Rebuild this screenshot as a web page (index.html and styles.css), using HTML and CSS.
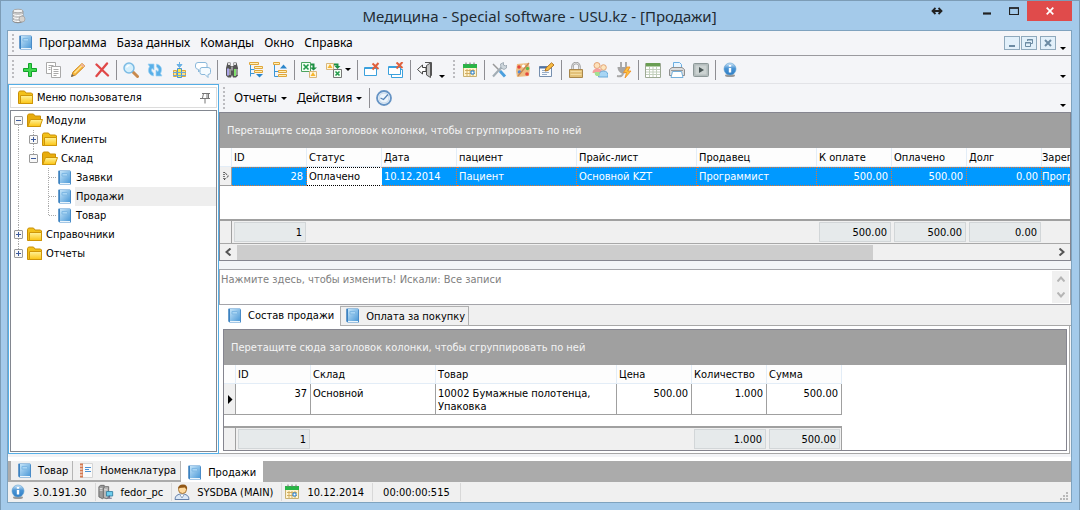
FILE: index.html
```html
<!DOCTYPE html>
<html lang="ru">
<head>
<meta charset="utf-8">
<title>Медицина - Special software - USU.kz - [Продажи]</title>
<link rel="stylesheet" href="styles.css">
</head>
<body>
<svg class="sprite" aria-hidden="true">
  <defs>
    <linearGradient id="g-book" x1="0" y1="0" x2="1" y2="1"><stop offset="0" stop-color="#c4e4f9"/><stop offset="1" stop-color="#4f9bd8"/></linearGradient>
    <linearGradient id="g-fold" x1="0" y1="0" x2="0" y2="1"><stop offset="0" stop-color="#fff39a"/><stop offset="1" stop-color="#fbc413"/></linearGradient>
    <linearGradient id="g-info" x1="0" y1="0" x2="0" y2="1"><stop offset="0" stop-color="#d5eafa"/><stop offset=".45" stop-color="#4a94d4"/><stop offset="1" stop-color="#2f7ec6"/></linearGradient>
  </defs>
  <symbol id="book" viewBox="0 0 16 16"><path d="M1.500.5h11.500l1 1v13H2.500l-1-1z" fill="#4a90cd"/><path d="M3 1h10v12H3z" fill="url(#g-book)"/><path d="M2 1v12.500" stroke="#2f74b5"/><path d="M5 3.500h5.500v2.500H5z" fill="#a9d5f4" stroke="#7fb8e4"/><path d="M3 13.500h10" stroke="#eaf5fc"/><path d="M13.500 2v12" stroke="#4a8cc8"/></symbol>
  <symbol id="folder" viewBox="0 0 16 16"><path d="M.5 13.500v-11l1-1.500h5l1.500 2h5.500l1 1v9.500z" fill="#f2c11a" stroke="#c98f06"/><path d="M2.500 13.500v-8h12v8z" fill="url(#g-fold)" stroke="#cf9608"/></symbol>
  <symbol id="folder-open" viewBox="0 0 16 16"><path d="M.5 13.500v-11l1-1.500h5l1.500 2h5.500v10.500z" fill="#e8ac0c" stroke="#c98f06"/><path d="M.8 13.500 3.500 6.500h12l-2.500 7z" fill="url(#g-fold)" stroke="#cf9608"/></symbol>
  <symbol id="db" viewBox="0 0 16 16"><ellipse cx="7" cy="13" rx="5.500" ry="2.200" fill="#8a8a8a"/><path d="M2 3v9.500c0 2 10 2 10 0V3z" fill="#c9c9c9" stroke="#999"/><path d="M2 6c1 2 9 2 10 0M2 9c1 2 9 2 10 0M2 12c1 2 9 2 10 0" fill="none" stroke="#fff"/><ellipse cx="7" cy="3" rx="5" ry="1.800" fill="#f4f4f4" stroke="#aaa"/><circle cx="11" cy="11" r="3" fill="#d6d3cf" stroke="#aaa"/></symbol>
  <symbol id="plus" viewBox="0 0 16 16"><path d="M6.500 1.500h3v5h5v3h-5v5h-3v-5h-5v-3h5z" fill="#3fd64f" stroke="#12a32a"/></symbol>
  <symbol id="copy" viewBox="0 0 16 16"><g fill="#fff" stroke="#a9a9a9"><path d="M.5.5h9v11h-9z"/><path d="M5.500 4.500h9v11h-9z"/><path d="M2.500 3.500h5M2.500 5.500h2M2.500 7.500h2M7.500 7.500h5M7.500 9.500h5M7.500 11.500h5M7.500 13.500h3"/></g></symbol>
  <symbol id="pencil" viewBox="0 0 16 16"><path d="M1.500 14.500 3 10 12 1.500l2.800 2.500-9.300 9z" fill="#f7b73b" stroke="#d18a20"/><path d="m4.500 11 8-8" stroke="#ffe39a" stroke-width="1.500"/><path d="m12 1.500 2.800 2.500-1.500 1.400L10.500 3z" fill="#efb39b"/><path d="m1 15 1-3 2 1.800z" fill="#666"/></symbol>
  <symbol id="cross" viewBox="0 0 16 16"><path d="m2.500 2.500 11.500 11M13 1.500 2.500 14" stroke="#e04848" stroke-width="2.300" stroke-linecap="round"/></symbol>
  <symbol id="find" viewBox="0 0 16 16"><path d="m10 10 4.500 4.500" stroke="#c98a4d" stroke-width="3" stroke-linecap="round"/><circle cx="6" cy="6" r="5" fill="#d4effc" stroke="#7bbbe4" stroke-width="1.500"/><path d="M3.500 5.500c.5-1.500 1.500-2 3-2" fill="none" stroke="#fff" stroke-width="1.500"/></symbol>
  <symbol id="refresh" viewBox="0 0 16 16"><path d="M1 2h6v6L5 6.500C4 8 4.500 10 6.500 11v3C2 13 0 9 2.500 4.500zM15 14H9V8l2 1.500C12 8 11.500 6 9.500 5V2C14 3 16 7 13.500 11.500z" fill="#5ab0e8" stroke="#9dd2f4" stroke-width=".7"/></symbol>
  <symbol id="sum" viewBox="0 0 16 16"><path d="M2.500 8.500h3v6h-3zM10.500 8.500h4v6h-4z" fill="#fbe08d" stroke="#dca83a"/><path d="M6.500 6.500h4v9h-4z" fill="#ffe84a" stroke="#4a95d4"/><path d="M2 10.500h13M2 13.500h13" stroke="#6aa9da"/><path d="M8.500 0v4M6 2.500h5L8.500 5.500z" stroke="#69b1e5" fill="#69b1e5"/></symbol>
  <symbol id="chat" viewBox="0 0 16 16"><path d="M.5 3q0-2.500 2.500-2.500h7q2 0 2 2v3q0 2-2 2H6L3.500 10V7.500Q.5 7 .5 5z" fill="#fff" stroke="#8ab8da"/><path d="M5 7.500q0-2 2-2h6q2.500 0 2.500 2v3q0 2-2.500 2v3l-3-3H7q-2 0-2-2z" fill="#f5fbff" stroke="#8ab8da"/></symbol>
  <symbol id="binoculars" viewBox="0 0 16 16"><path d="M3.500.5h3V4h3V.5h3L14 6v7.500L12 15.500H9L8 13l-1 2.500H4l-2-2V6z" fill="#555"/><path d="M4 6.500v7" stroke="#a9a3e8" stroke-width="2"/><path d="M11 7v7" stroke="#7fe06b" stroke-width="2"/><path d="M6 7v6M13 7v6" stroke="#ddd"/><path d="M4 1h2v2H4zM10 1h2v2h-2z" fill="#ddd"/><path d="M7.500 4.500h1v4h-1z" fill="#ddd"/></symbol>
  <symbol id="tree-down" viewBox="0 0 16 16"><path d="M2.500 3v11.500M2.500 7.500h4M2.500 11.500h4" stroke="#3b96d6" fill="none"/><path d="M1.500.5h9v2h-9zM6.500 4.500h8v2h-8zM6.500 8.500h8v2h-8z" fill="#fff0b5" stroke="#dfa63c"/><path d="M8 12h7l-3.500 3.500z" fill="#2b86cc"/></symbol>
  <symbol id="tree-up" viewBox="0 0 16 16"><path d="M2.500 3v11.500h4M2.500 9.500h4" stroke="#3b96d6" fill="none"/><path d="M1.500.5h6v2h-6zM6.500 8.500h8v2h-8zM6.500 12.500h8v2h-8z" fill="#fff0b5" stroke="#dfa63c"/><path d="M8 6.500h7L11.500 2.500z" fill="#2b86cc"/></symbol>
  <symbol id="excel-out" viewBox="0 0 16 16"><path d="M.5.500h9v9h-9z" fill="#f3fff3" stroke="#4ca461"/><path d="m2.500 2.500 5 5m0-5-5 5" stroke="#249b4c" stroke-width="1.700"/><path d="M10 2.500h2.500v4" fill="none" stroke="#1c8f42" stroke-width="2"/><path d="M9 5.500h7l-3.500 3z" fill="#1c8f42"/><path d="M8.500 9.500h7v6h-7z" fill="#fff6df" stroke="#d9b77a"/><path d="m12 10 2.500 4h-5z" fill="#f6b52d"/></symbol>
  <symbol id="excel-in" viewBox="0 0 16 16"><path d="M.5 1.500h7v6h-7z" fill="#fff6df" stroke="#d9b77a"/><path d="M4 2 6.500 6h-5z" fill="#f6b52d"/><path d="M8 2.500h3.500v2" fill="none" stroke="#1c8f42" stroke-width="2"/><path d="M8.500 4h6l-3 3z" fill="#1c8f42"/><path d="M7.500 7.500h8v8h-8z" fill="#f3fff3" stroke="#777"/><path d="m9.500 9.500 4 4m0-4-4 4" stroke="#249b4c" stroke-width="1.600"/></symbol>
  <symbol id="win-close" viewBox="0 0 16 16"><path d="M.5 5.500h12v8H.5z" fill="#fff" stroke="#3ba1dd"/><path d="M.5 6.500h12" stroke="#3ba1dd"/><path d="m8.500 1.500 6 5.500m0-6-6 6.500" stroke="#e0603c" stroke-width="2"/></symbol>
  <symbol id="win-close-all" viewBox="0 0 16 16"><path d="M3.500 7.500h11v8h-11z" fill="#fff" stroke="#3ba1dd"/><path d="M.5 4.500h12v8H.5z" fill="#fff" stroke="#3ba1dd"/><path d="M.5 5.500h12" stroke="#3ba1dd"/><path d="m8.500.5 6 5.500m0-6-6 6.500" stroke="#e0603c" stroke-width="2"/></symbol>
  <symbol id="exit" viewBox="0 0 16 16"><path d="M8 .5h6.500v13H13" fill="none" stroke="#555"/><path d="M9.500 3.500 13.500 1v14.500l-4-2.500z" fill="#c4c4c4" stroke="#555"/><path d="M.5 7.500 5.500 3v2.500h3.500v4H5.500V12z" fill="#fff" stroke="#444"/></symbol>
  <symbol id="calendar" viewBox="0 0 16 16"><path d="M1.500 2.500h13v12h-13z" fill="#fff4cf" stroke="#c8b071"/><path d="M1 2h14v4H1z" fill="#28b545"/><path d="M4 .5v2.500M8 .5v2.500M12 .5v2.500" stroke="#777"/><path d="M3 8.500h10M3 11.500h10M5 7v7M8 7v7M11 7v7" stroke="#d3ae62"/><path d="M9 9h3v3H9z" fill="#fff" stroke="#1c7bd0"/></symbol>
  <symbol id="tools" viewBox="0 0 16 16"><path d="m2 2 9 9" stroke="#999" stroke-width="1.500"/><path d="m9 9 5 5.500" stroke="#4b9fde" stroke-width="3"/><path d="m13 3-3 3-2.500 2.500L2 14.500" stroke="#a3aeb6" stroke-width="2.200"/><path d="m9.500 2 3-1.500v2.500l2 1 1-1v3l-2.500 1.500L10 6z" fill="#cdd6dc" stroke="#8e9ba5" stroke-width=".7"/></symbol>
  <symbol id="palette" viewBox="0 0 16 16"><path d="M2 2 13 1l2 5-1 8-12 1L1 9z" fill="#edbd82"/><circle cx="4" cy="5" r="1.800" fill="#e6473c"/><circle cx="8.500" cy="4" r="1.600" fill="#fff"/><circle cx="12.500" cy="6.500" r="1.700" fill="#5cbb4c"/><circle cx="4.500" cy="10" r="1.800" fill="#508ada"/><circle cx="12" cy="12" r="1.800" fill="#e6473c"/><path d="m14 1-6 7-5 6" stroke="#c98752" stroke-width="1.300"/></symbol>
  <symbol id="note" viewBox="0 0 16 16"><path d="M.5 4.500h12v10H.5z" fill="#f8fbff" stroke="#768fae"/><path d="M.5 5.500h12" stroke="#4f72a5" stroke-width="2"/><path d="M3 8.500h5M3 10.500h7M3 12.500h5" stroke="#97adc8"/><path d="m6 9 1-3L12.500.8 15 3 9 8.500z" fill="#f9bd43" stroke="#b07528"/></symbol>
  <symbol id="lock" viewBox="0 0 16 16"><path d="M4.500 8V4.500a3.500 3.500 0 0 1 7 0V8" fill="none" stroke="#999" stroke-width="2.400"/><path d="M4.500 8V4.500a3.500 3.500 0 0 1 7 0V8" fill="none" stroke="#ddd"/><path d="M1.500 7.500h13v8h-13z" fill="#e3c178" stroke="#a9874b"/><path d="M2.500 9.500h11M2.500 12.500h11" stroke="#f3dca2"/></symbol>
  <symbol id="users" viewBox="0 0 16 16"><circle cx="5" cy="3.500" r="3" fill="#fde1bb" stroke="#e3a476"/><path d="M.5 11q0-4.500 5-4.500T10 11z" fill="#f6a09c"/><circle cx="11.500" cy="5.500" r="2.800" fill="#fde5bd" stroke="#e3a476"/><path d="M6.500 15q0-6 5-6t4.500 6z" fill="#a8d5f4" stroke="#69a9d8"/><path d="M2.500 10h5v4h-3q-2-1-2-4z" fill="#a4e091"/></symbol>
  <symbol id="plug" viewBox="0 0 16 16"><path d="M5 0v5M10 0v5" stroke="#aaa" stroke-width="2"/><path d="M1.500 5h12v2q-2 4-5 4.500h-3Q1.500 9 1.500 5z" fill="#a5a5a5"/><path d="M7 11q0 4-6 3" fill="none" stroke="#aaa" stroke-width="2"/><path d="m11 5-3.500 5.500h3L9 16l6-7h-3.500L14 5z" fill="#ffc33f" stroke="#ed8d22" stroke-width=".8"/></symbol>
  <symbol id="sheet" viewBox="0 0 16 16"><path d="M.5 1.500h15v14H.5z" fill="#fff" stroke="#9da994"/><path d="M1 1h14v3.500H1z" fill="#6a9e53"/><path d="M4.500 5v10M8 5v10M11.500 5v10M1 7.500h14M1 10h14M1 12.500h14" stroke="#c2cfbc"/></symbol>
  <symbol id="printer" viewBox="0 0 16 16"><path d="M4.500 7V.5h6l2 2V8" fill="#e8f5ff" stroke="#6aaee2"/><path d="M.5 7.500 3 5.500h10l2.500 2v6H.5z" fill="#dcdcdc" stroke="#8f8f8f"/><path d="M3.500 9.500h9l1.500 6H2z" fill="#fff" stroke="#74afda"/><path d="M2 8.500h12" stroke="#999"/></symbol>
  <symbol id="play" viewBox="0 0 16 16"><rect x=".5" y="1.500" width="15" height="13" rx="1" fill="#b4bdbd" stroke="#8d9898"/><path d="M2.500 3.500h11v9h-11z" fill="#ccd3d2"/><path d="M6 5v6l5-3z" fill="#4b5757"/></symbol>
  <symbol id="info" viewBox="0 0 16 16"><ellipse cx="8" cy="13.500" rx="5" ry="1.500" fill="#999"/><circle cx="8" cy="7" r="6" fill="url(#g-info)" stroke="#5c9dcf" stroke-width=".6"/><path d="M8 3v1.700M8 6v4.500" stroke="#fff" stroke-width="2.400"/></symbol>
  <symbol id="clock" viewBox="0 0 16 16"><circle cx="8" cy="8" r="7" fill="#edf5fc" stroke="#6593c4" stroke-width="1.800"/><circle cx="8" cy="8" r="5" fill="none" stroke="#c5d7ea"/><path d="M4.500 8 7.500 9.500 12 4.500" fill="none" stroke="#5382b6" stroke-width="1.200"/></symbol>
  <symbol id="pin" viewBox="0 0 12 12"><path d="M3 1.500h8M4.500 1.500 3.500 6M9.500 1.500v4.500M8 2v4M1 6.500h10M6 7v4.500" stroke="#777" fill="none"/></symbol>
  <symbol id="notebook" viewBox="0 0 16 16"><path d="M1.500.5h12v14h-12z" fill="#fafafa" stroke="#d5d5d5"/><path d="M1 .5h3v14H1z" fill="#d37950"/><path d="M.5 3h3M.5 6h3M.5 9h3M.5 12h3" stroke="#fff"/><path d="M6 4.500h6M6 8.500h6M6 6.500h4" stroke="#4a92d5"/></symbol>
  <symbol id="server" viewBox="0 0 18 16"><path d="M1 2 3 .5h4V14l-2 1.500-4-2z" fill="#9b9b9b" stroke="#666"/><path d="M6 3.500 8 2h4v12l-2 1.500-4-1z" fill="#b9b9b9" stroke="#666"/><path d="M2 4h3M2 6h3M7 5.500h3" stroke="#e5e5e5"/><path d="M9.500 7.500h7v5h-7z" fill="#71cfee" stroke="#337fa3"/><path d="M13 12v2.500M10.500 15h5" stroke="#557"/></symbol>
  <symbol id="user" viewBox="0 0 16 16"><path d="M1 15.500q0-5.500 7-5.500t7 5.500z" fill="#dbe8f7" stroke="#6681a9"/><path d="m5.500 10 2.500 4 2.500-4z" fill="#fff" stroke="#8ea2bc"/><circle cx="8.500" cy="5.500" r="4" fill="#ffd99c" stroke="#a87637"/><path d="M4 5Q4 .5 9 .5T13 6L11 3.500 5 4z" fill="#915817"/></symbol>
</svg>

<div class="window">
  <header class="titlebar">
    <svg class="icon app-icon"><use href="#db"/></svg>
    <h1 class="title">Медицина - Special software - USU.kz - [Продажи]</h1>
    <div class="window-controls">
      <button class="win-btn wide" aria-label="Растянуть"><svg width="12" height="8" viewBox="0 0 12 8"><path d="M2 4h8M4.500 1 1.500 4l3 3M7.500 1l3 3-3 3" fill="none" stroke="#222" stroke-width="1.800"/></svg></button>
      <button class="win-btn" aria-label="Свернуть"><svg width="10" height="8" viewBox="0 0 10 8"><path d="M1 6.500h8" stroke="#222" stroke-width="2.200"/></svg></button>
      <button class="win-btn" aria-label="Развернуть"><svg width="10" height="8" viewBox="0 0 10 8"><path d="M.5 1h9v6.500h-9z" fill="none" stroke="#222" stroke-width="1.200"/><path d="M0 1h10" stroke="#222" stroke-width="1.500"/></svg></button>
      <button class="win-btn close" aria-label="Закрыть"><svg width="8" height="8" viewBox="0 0 8 8"><path d="m.7.7 6.600 6.600m0-6.600L.7 7.300" stroke="#fff" stroke-width="1.700"/></svg></button>
    </div>
  </header>

  <div class="client">
    <nav class="menubar">
      <span class="grip"></span>
      <svg class="icon"><use href="#book"/></svg>
      <button class="menu-item">Программа</button>
      <button class="menu-item">База данных</button>
      <button class="menu-item">Команды</button>
      <button class="menu-item">Окно</button>
      <button class="menu-item">Справка</button>
      <div class="mdi-controls">
        <button class="mdi-btn" aria-label="Свернуть окно"><svg width="10" height="10" viewBox="0 0 10 10"><path d="M2 8h6" stroke="#6c8ba3" stroke-width="2"/></svg></button>
        <button class="mdi-btn" aria-label="Восстановить окно"><svg width="10" height="10" viewBox="0 0 10 10"><path d="M3.500 3V1.500h5v4H7M3 2h6M1.500 4.500h5v4h-5zM1 5h6" fill="none" stroke="#6c8ba3"/></svg></button>
        <button class="mdi-btn last" aria-label="Закрыть окно"><svg width="10" height="10" viewBox="0 0 10 10"><path d="m2 2 6 6m0-6L2 8" stroke="#6c8ba3" stroke-width="2"/></svg></button>
      </div>
      <span class="more"></span>
    </nav>

    <div class="toolbar main-toolbar">
      <span class="grip"></span>
      <button class="tool" aria-label="Добавить"><svg class="icon"><use href="#plus"/></svg></button>
      <button class="tool" aria-label="Копировать"><svg class="icon"><use href="#copy"/></svg></button>
      <button class="tool" aria-label="Изменить"><svg class="icon"><use href="#pencil"/></svg></button>
      <button class="tool" aria-label="Удалить"><svg class="icon"><use href="#cross"/></svg></button>
      <span class="sep"></span>
      <button class="tool" aria-label="Поиск"><svg class="icon"><use href="#find"/></svg></button>
      <button class="tool" aria-label="Обновить"><svg class="icon"><use href="#refresh"/></svg></button>
      <button class="tool" aria-label="Итоги"><svg class="icon"><use href="#sum"/></svg></button>
      <button class="tool" aria-label="Сообщения"><svg class="icon"><use href="#chat"/></svg></button>
      <span class="sep"></span>
      <button class="tool" aria-label="Найти"><svg class="icon"><use href="#binoculars"/></svg></button>
      <button class="tool" aria-label="Развернуть группы"><svg class="icon"><use href="#tree-down"/></svg></button>
      <button class="tool" aria-label="Свернуть группы"><svg class="icon"><use href="#tree-up"/></svg></button>
      <span class="sep"></span>
      <button class="tool" aria-label="Экспорт"><svg class="icon"><use href="#excel-out"/></svg></button>
      <button class="tool drop" aria-label="Импорт"><svg class="icon"><use href="#excel-in"/></svg><span class="caret"></span></button>
      <span class="sep"></span>
      <button class="tool" aria-label="Закрыть вкладку"><svg class="icon"><use href="#win-close"/></svg></button>
      <button class="tool" aria-label="Закрыть все"><svg class="icon"><use href="#win-close-all"/></svg></button>
      <span class="sep"></span>
      <button class="tool" aria-label="Выход"><svg class="icon"><use href="#exit"/></svg></button>
      <span class="more inner"></span>
      <span class="grip second"></span>
      <button class="tool" aria-label="Календарь"><svg class="icon"><use href="#calendar"/></svg></button>
      <span class="sep"></span>
      <button class="tool" aria-label="Настройки"><svg class="icon"><use href="#tools"/></svg></button>
      <button class="tool" aria-label="Оформление"><svg class="icon"><use href="#palette"/></svg></button>
      <button class="tool" aria-label="Заметка"><svg class="icon"><use href="#note"/></svg></button>
      <span class="sep"></span>
      <button class="tool" aria-label="Блокировка"><svg class="icon"><use href="#lock"/></svg></button>
      <button class="tool" aria-label="Пользователи"><svg class="icon"><use href="#users"/></svg></button>
      <button class="tool" aria-label="Подключение"><svg class="icon"><use href="#plug"/></svg></button>
      <span class="sep"></span>
      <button class="tool" aria-label="Таблица"><svg class="icon"><use href="#sheet"/></svg></button>
      <button class="tool" aria-label="Печать"><svg class="icon"><use href="#printer"/></svg></button>
      <button class="tool" aria-label="Запуск"><svg class="icon"><use href="#play"/></svg></button>
      <span class="sep"></span>
      <button class="tool" aria-label="Справка"><svg class="icon"><use href="#info"/></svg></button>
      <span class="more"></span>
    </div>

    <div class="workspace">
      <aside class="sidebar">
        <div class="side-head">
          <svg class="icon"><use href="#folder"/></svg>
          <span class="side-title">Меню пользователя</span>
          <button class="pin" aria-label="Закрепить"><svg width="12" height="12"><use href="#pin"/></svg></button>
        </div>
        <div class="tree">
          <div class="node"><span class="cell down"><button class="toggle" aria-label="Свернуть"></button></span><svg class="icon"><use href="#folder-open"/></svg><span class="label">Модули</span></div>
          <div class="node"><span class="cell full"></span><span class="cell full"><button class="toggle plus" aria-label="Развернуть"></button></span><svg class="icon"><use href="#folder"/></svg><span class="label">Клиенты</span></div>
          <div class="node"><span class="cell full"></span><span class="cell up"><button class="toggle" aria-label="Свернуть"></button></span><svg class="icon"><use href="#folder-open"/></svg><span class="label">Склад</span></div>
          <div class="node"><span class="cell full"></span><span class="cell"></span><span class="cell full branch"></span><svg class="icon"><use href="#book"/></svg><span class="label">Заявки</span></div>
          <div class="node"><span class="cell full"></span><span class="cell"></span><span class="cell full branch"></span><svg class="icon"><use href="#book"/></svg><span class="label current">Продажи</span></div>
          <div class="node"><span class="cell full"></span><span class="cell"></span><span class="cell up branch"></span><svg class="icon"><use href="#book"/></svg><span class="label">Товар</span></div>
          <div class="node"><span class="cell full"><button class="toggle plus" aria-label="Развернуть"></button></span><svg class="icon"><use href="#folder"/></svg><span class="label">Справочники</span></div>
          <div class="node"><span class="cell up"><button class="toggle plus" aria-label="Развернуть"></button></span><svg class="icon"><use href="#folder"/></svg><span class="label">Отчеты</span></div>
        </div>
      </aside>

      <main class="content">
        <div class="toolbar sub-toolbar">
          <span class="grip"></span>
          <button class="text-tool">Отчеты<span class="caret"></span></button>
          <button class="text-tool">Действия<span class="caret"></span></button>
          <span class="sep"></span>
          <button class="tool" aria-label="Таймер"><svg class="icon"><use href="#clock"/></svg></button>
          <span class="more"></span>
        </div>

        <section class="grid-box">
          <div class="group-panel">Перетащите сюда заголовок колонки, чтобы сгруппировать по ней</div>
          <table class="grid sales">
            <colgroup><col class="w-mark"><col class="w-s"><col class="w-s"><col class="w-s"><col class="w-l"><col class="w-l"><col class="w-l"><col class="w-s"><col class="w-s"><col class="w-s"><col></colgroup>
            <thead><tr><th></th><th>ID</th><th>Статус</th><th>Дата</th><th>пациент</th><th>Прайс-лист</th><th>Продавец</th><th>К оплате</th><th>Оплачено</th><th>Долг</th><th>Зарег</th></tr></thead>
            <tbody>
              <tr class="selected"><td class="mark"><svg width="6" height="8" viewBox="0 0 6 8"><path d="M1 0v8l4.500-4z" fill="none" stroke="#000" stroke-dasharray="1 1"/></svg></td><td class="num">28</td><td class="focused">Оплачено</td><td>10.12.2014</td><td>Пациент</td><td>Основной KZT</td><td>Программист</td><td class="num">500.00</td><td class="num">500.00</td><td class="num">0.00</td><td>Прогр</td></tr>
              <tr class="blank"><td colspan="11"></td></tr>
            </tbody>
            <tfoot><tr><td class="mark"></td><td><span class="total">1</span></td><td></td><td></td><td></td><td></td><td></td><td><span class="total">500.00</span></td><td><span class="total">500.00</span></td><td><span class="total">0.00</span></td><td></td></tr></tfoot>
          </table>
          <div class="scroll-x">
            <button class="arrow" aria-label="Влево"><svg width="7" height="8" viewBox="0 0 7 8"><path d="M5.500.5 1.500 4l4 3.500" fill="none" stroke="#555" stroke-width="2"/></svg></button>
            <div class="track"><div class="thumb"></div></div>
            <button class="arrow" aria-label="Вправо"><svg width="7" height="8" viewBox="0 0 7 8"><path d="M1.500.5 5.500 4l-4 3.500" fill="none" stroke="#555" stroke-width="2"/></svg></button>
          </div>
        </section>

        <div class="filter">
          <textarea class="filter-text" aria-label="Фильтр" readonly>Нажмите здесь, чтобы изменить! Искали: Все записи</textarea>
          <div class="scroll-y">
            <button class="arrow" aria-label="Вверх"><svg width="8" height="6" viewBox="0 0 8 6"><path d="m.5 5.500 3.500-4 3.500 4" fill="none" stroke="#b5b5b5" stroke-width="2"/></svg></button>
            <button class="arrow" aria-label="Вниз"><svg width="8" height="6" viewBox="0 0 8 6"><path d="m.5.5 3.500 4 3.500-4" fill="none" stroke="#b5b5b5" stroke-width="2"/></svg></button>
          </div>
        </div>

        <div class="detail-tabs">
          <button class="detail-tab active"><svg class="icon"><use href="#book"/></svg>Состав продажи</button>
          <button class="detail-tab"><svg class="icon"><use href="#book"/></svg>Оплата за покупку</button>
        </div>
        <div class="detail-pane">
          <section class="grid-box">
            <div class="group-panel">Перетащите сюда заголовок колонки, чтобы сгруппировать по ней</div>
            <table class="grid items">
              <colgroup><col class="w-mark"><col class="w-s"><col class="w-xl"><col class="w-xxl"><col class="w-s"><col class="w-s"><col class="w-s"></colgroup>
              <thead><tr><th></th><th>ID</th><th>Склад</th><th>Товар</th><th>Цена</th><th>Количество</th><th>Сумма</th></tr></thead>
              <tbody>
                <tr class="item"><td class="mark"><svg width="6" height="9" viewBox="0 0 6 9"><path d="M1 0v9l4.500-4.500z"/></svg></td><td class="num">37</td><td>Основной</td><td>10002 Бумажные полотенца, Упаковка</td><td class="num">500.00</td><td class="num">1.000</td><td class="num">500.00</td></tr>
                <tr class="blank"><td colspan="7"></td></tr>
              </tbody>
              <tfoot><tr><td class="mark"></td><td><span class="total">1</span></td><td></td><td></td><td></td><td><span class="total">1.000</span></td><td><span class="total">500.00</span></td></tr></tfoot>
            </table>
          </section>
        </div>
      </main>
    </div>

    <div class="mdi-tabs">
      <button class="mdi-tab"><svg class="icon"><use href="#book"/></svg>Товар</button>
      <button class="mdi-tab"><svg class="icon"><use href="#notebook"/></svg>Номенклатура</button>
      <button class="mdi-tab active"><svg class="icon"><use href="#book"/></svg>Продажи</button>
    </div>

    <footer class="status">
      <span class="status-item"><svg class="icon"><use href="#info"/></svg>3.0.191.30</span>
      <span class="status-item"><svg class="icon"><use href="#server"/></svg>fedor_pc</span>
      <span class="status-item"><svg class="icon"><use href="#user"/></svg>SYSDBA (MAIN)</span>
      <span class="status-item"><svg class="icon"><use href="#calendar"/></svg>10.12.2014</span>
      <span class="status-item timer">00:00:00:515</span>
      <svg class="size-grip" width="8" height="8" viewBox="0 0 8 8"><path d="M6 0h2v2H6zM3 3h2v2H3zM6 3h2v2H6zM0 6h2v2H0zM3 6h2v2H3zM6 6h2v2H6z" fill="#b8b8b8"/></svg>
    </footer>
  </div>
</div>
</body>
</html>
```
FILE: styles.css
```css
* {
  box-sizing: border-box;
}

body {
  margin: 0;
  font-family: "DejaVu Sans Condensed", "DejaVu Sans", sans-serif;
  font-size: 11px;
  line-height: 13px;
  color: #000;
}

button {
  margin: 0;
  padding: 0;
  border: 0;
  background: none;
  font: inherit;
  color: inherit;
}

.sprite {
  position: absolute;
  width: 0;
  height: 0;
}

.icon {
  width: 16px;
  height: 16px;
  flex: none;
}

.window {
  min-height: 100vh;
  display: flex;
  flex-direction: column;
  padding: 0 7px 7px 6px;
  background: #a4caea;
  border: 1px solid #7c9cb6;
}

/* Title bar */
.titlebar {
  position: relative;
  display: flex;
  align-items: center;
  height: 29px;
}

.app-icon {
  margin-left: 4px;
}

.title {
  flex: 1;
  margin: 0;
  padding-right: 20px;
  text-align: center;
  font: 400 15px/22px "Noto Sans", sans-serif;
  color: #1f2a33;
}

.window-controls {
  position: absolute;
  top: 0;
  right: 0;
  display: flex;
}

.win-btn {
  display: flex;
  align-items: center;
  justify-content: center;
  width: 27px;
  height: 20px;
}

.win-btn.wide {
  margin-right: 23px;
}

.win-btn.close {
  width: 45px;
  background: #e04b4b;
}

/* Client area */
.client {
  flex: 1;
  display: flex;
  flex-direction: column;
  border: 1px solid #7fa3bf;
  background: #f3f4f7;
}

.menubar,
.toolbar {
  display: flex;
  align-items: center;
  background: #f4f5f8;
  font-family: "Noto Sans", sans-serif;
  font-size: 12px;
}

.menubar {
  height: 25px;
  border-bottom: 1px solid #9a9a9f;
}

.menu-item {
  padding: 0 5px;
  line-height: 20px;
}

.grip {
  width: 2px;
  height: 19px;
  margin: 0 4px;
  background: repeating-linear-gradient(to bottom, #bcbcc0 0 2px, transparent 2px 4px);
}

.mdi-controls {
  display: flex;
  gap: 1px;
  margin-left: auto;
}

.mdi-btn {
  display: flex;
  align-items: center;
  justify-content: center;
  width: 16px;
  height: 14px;
  border: 1px solid #8fa9bc;
  background: #e2f0fa;
}

.mdi-btn.last {
  margin-left: 2px;
}

.more,
.caret {
  width: 0;
  height: 0;
  border: 3px solid transparent;
  border-top-color: #000;
  border-bottom: 0;
}

.more {
  align-self: flex-end;
  margin: 0 5px 5px 4px;
}

.toolbar .more {
  margin-left: auto;
}

.toolbar .more.inner {
  margin: 0 5px 5px 2px;
}

.main-toolbar {
  height: 28px;
  border-bottom: 1px solid #e2e3e7;
}

.grip.second {
  margin: 0 3px;
}

.tool {
  display: flex;
  align-items: center;
  justify-content: center;
  width: 24px;
  height: 22px;
}

.tool.drop {
  width: 34px;
  gap: 3px;
}

.sep {
  width: 1px;
  height: 20px;
  margin: 0 2px;
  background: #8e8e93;
}

.workspace {
  flex: 1;
  display: flex;
}

/* Sidebar */
.sidebar {
  width: 211px;
  flex: none;
  display: flex;
  flex-direction: column;
  padding: 2px 1px 1px;
  border: 1px solid #55aee6;
  margin-bottom: 3px;
  background: #fff;
}

.side-head {
  display: flex;
  align-items: center;
  height: 21px;
  margin-bottom: 2px;
  padding: 0 5px 0 7px;
  border: 1px solid #dcdcdc;
}

.side-title {
  flex: 1;
  margin-left: 3px;
}

.pin {
  width: 12px;
  height: 12px;
}

.pin svg {
  display: block;
}

.tree {
  flex: 1;
  border: 1px solid #828790;
}

.node {
  display: flex;
  align-items: center;
  height: 19px;
}

.cell {
  position: relative;
  width: 15px;
  height: 19px;
  flex: none;
  padding: 5px 3px;
  background-repeat: no-repeat;
}

.full,
.up,
.down {
  background-image: repeating-linear-gradient(to bottom, #aaa 0 1px, transparent 1px 2px);
  background-size: 1px 100%;
  background-position: 7px 0;
}

.up {
  background-size: 1px 10px;
}

.down {
  background-size: 1px 10px;
  background-position: 7px 10px;
}

.branch::after {
  content: "";
  position: absolute;
  left: 8px;
  top: 9px;
  width: 7px;
  border-top: 1px dotted #aaa;
}

.toggle {
  display: block;
  width: 9px;
  height: 9px;
  border: 1px solid #9a9a9a;
  border-radius: 1px;
  background: linear-gradient(#3c5a9c, #3c5a9c) 1px 3px / 5px 1px no-repeat, #f8f8f8;
}

.toggle.plus {
  background: linear-gradient(#3c5a9c, #3c5a9c) 1px 3px / 5px 1px no-repeat, linear-gradient(#3c5a9c, #3c5a9c) 3px 1px / 1px 5px no-repeat, #f8f8f8;
}

.node .icon {
  margin-left: 1px;
}

.label {
  flex: 1;
  margin-left: 2px;
  padding-left: 1px;
  line-height: 19px;
}

.label.current {
  background: #eee;
}

/* Right side */
.content {
  flex: 1;
  min-width: 0;
  display: flex;
  flex-direction: column;
  margin-bottom: 3px;
}

.sub-toolbar {
  height: 28px;
}

.sub-toolbar .grip {
  height: 23px;
}

.text-tool {
  display: flex;
  align-items: center;
  gap: 4px;
  padding: 0 5px;
  line-height: 22px;
}

.grid-box {
  background: #fff;
  border: 1px solid #85858f;
}

.group-panel {
  padding: 1px 7px 0;
  background: #a0a0a0;
  color: #f4f4f4;
  line-height: 34px;
}

.grid {
  table-layout: fixed;
  border-collapse: separate;
  border-spacing: 0;
}

.sales {
  width: 100%;
}

.items {
  width: 0;
}

.w-mark { width: 12px; }
.w-s { width: 75px; }
.w-l { width: 120px; }
.w-xl { width: 125px; }
.w-xxl { width: 181px; }

.grid th {
  height: 19px;
  padding: 0 2px;
  border-right: 1px solid #e3edf7;
  border-bottom: 1px solid #e3edf7;
  background: #fdfdfd;
  font-weight: 400;
  text-align: left;
  white-space: nowrap;
}

.grid td {
  padding: 0 2px;
}

.sales th:last-child,
.sales td:last-child {
  padding: 0;
  border-right: 0;
  overflow: hidden;
}

.grid .num {
  padding-right: 3px;
  text-align: right;
}

.grid .mark {
  padding: 0;
  background: #f0f0f0;
  border-right: 1px solid #a0a0a0;
  text-align: center;
  vertical-align: middle;
}

.mark svg {
  display: block;
  margin: 0 auto;
}

.selected td {
  height: 19px;
  background: #0099ff;
  border: 1px dotted #e8742c;
  border-width: 1px 1px 1px 0;
  color: #fff;
  white-space: nowrap;
}

.selected .mark {
  border: 1px solid #a0a0a0;
  border-width: 0 1px 1px 0;
}

.selected .focused {
  background: #fff;
  border-color: #000;
  border-right-color: #fff;
  color: #000;
}

.sales .blank td {
  height: 33px;
}

.item td {
  height: 31px;
  vertical-align: top;
  padding-top: 3px;
  border-right: 1px solid #a0a0a0;
  border-bottom: 1px solid #a0a0a0;
}

.items .blank td {
  height: 11px;
}

.grid tfoot td {
  height: 24px;
  padding: 1px 1px 1px 2px;
  background: #f0f0f0;
  border-top: 2px solid #a0a0a0;
}

.items tfoot td:last-child {
  border-right: 1px solid #a0a0a0;
}

.total {
  display: block;
  height: 20px;
  padding: 0 3px;
  border: 1px solid #d2d6d8;
  background: #e6eaeb;
  line-height: 19px;
  text-align: right;
}

.scroll-x {
  display: flex;
  align-items: center;
  height: 17px;
  border-top: 1px solid #a8a8a8;
  background: #f0f0f0;
}

.arrow {
  display: flex;
  align-items: center;
  justify-content: center;
  width: 17px;
  height: 16px;
}

.track {
  flex: 1;
}

.thumb {
  width: 78%;
  height: 15px;
  background: #cdcdcd;
}

.filter {
  display: flex;
  margin-top: 8px;
  padding-right: 1px;
  border: 1px solid #a5a5aa;
  background: #fff;
}

.filter-text {
  flex: 1;
  height: 33px;
  padding: 3px 1px;
  border: 0;
  resize: none;
  font: inherit;
  color: #808080;
  background: none;
  overflow: hidden;
}

.scroll-y {
  display: flex;
  flex-direction: column;
  justify-content: space-around;
  background: #f0f0f0;
  margin: 1px 0;
}

.detail-tabs {
  display: flex;
  align-items: flex-end;
  height: 21px;
  background: #f0f0f0;
  box-shadow: inset 0 -1px #a8a8a8;
}

.detail-tab {
  display: flex;
  align-items: center;
  gap: 5px;
  height: 20px;
  padding: 0 3px 0 4px;
  border: 1px solid #b0b0b0;
}

.detail-tab.active {
  height: 21px;
  padding: 0 6px 0 8px;
  border: 0;
  background: #fff;
}

.detail-pane {
  flex: 1;
  display: flex;
  padding: 3px 2px 2px 4px;
  background: #fff;
  border: 1px solid #a8a8a8;
  border-width: 0 1px 1px 0;
  margin-right: 1px;
}

.detail-pane .grid-box {
  flex: 1;
}

/* Window tabs and status bar */
.mdi-tabs {
  display: flex;
  height: 25px;
  padding: 0 3px;
  border-top: 4px solid #fff;
  background: #ababab;
}

.mdi-tab {
  display: flex;
  align-items: center;
  gap: 5px;
  height: 19px;
  padding: 0 4px 0 6px;
  border-right: 1px solid #b5b5b5;
  background: #f0f0f0;
}

.mdi-tab.active {
  height: 21px;
  padding: 2px 7px 0 6px;
  background: #fff;
  border: 0;
}

.status {
  display: flex;
  align-items: center;
  height: 20px;
  background: #f0f0f0;
}

.status-item {
  display: flex;
  align-items: center;
  gap: 7px;
  height: 18px;
  padding: 0 8px 0 2px;
  border-right: 1px solid #d8d8d8;
}

.status-item.timer {
  padding: 0 10px;
}

.size-grip {
  align-self: flex-end;
  margin: 0 3px 2px auto;
}
```
